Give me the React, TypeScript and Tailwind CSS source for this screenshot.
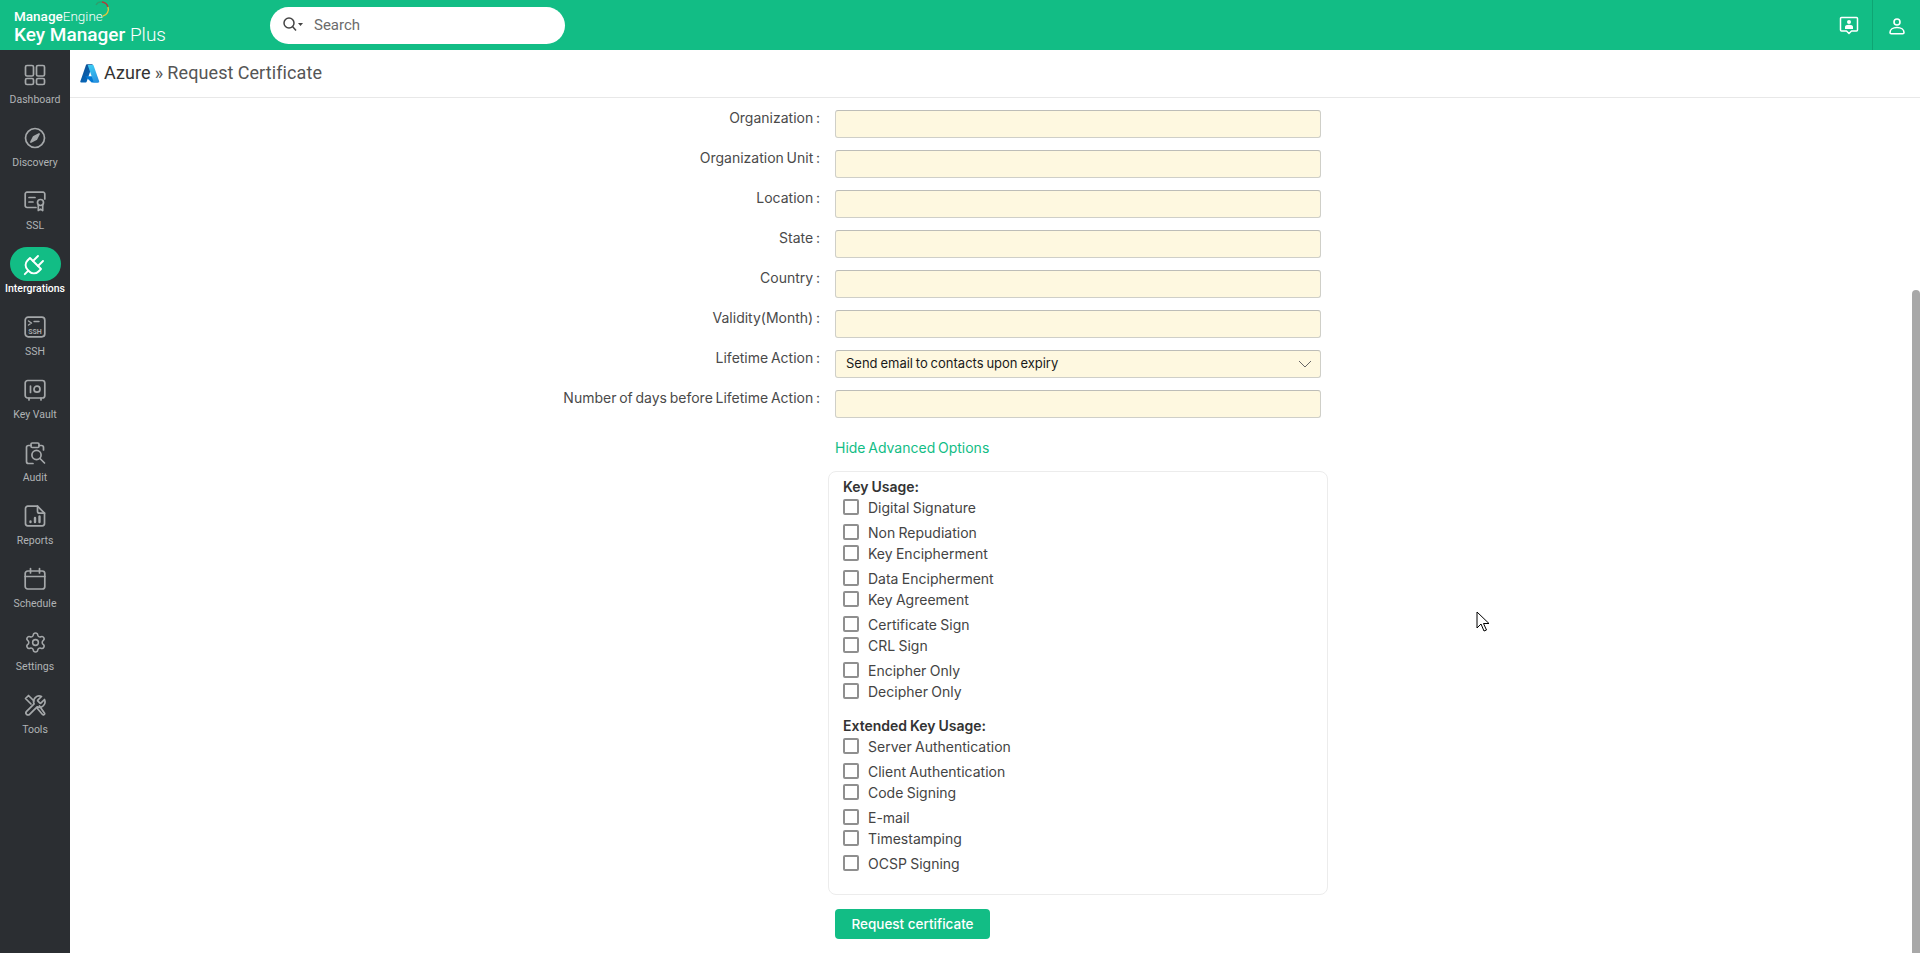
import React from "react";
import { Settings } from "lucide-react";

const stroke = { fill: "none", stroke: "currentColor", strokeWidth: 1.7, strokeLinecap: "round", strokeLinejoin: "round" } as const;

const Ic = ({ children, s = 24 }: { children: React.ReactNode; s?: number }) => (
  <svg width={s} height={s} viewBox="0 0 24 24" {...stroke}>{children}</svg>
);

const icons: Record<string, React.ReactNode> = {
  Dashboard: <Ic><rect x="2.5" y="2.5" width="8" height="10.5" rx="1.5" /><rect x="13.5" y="2.5" width="8" height="10.5" rx="1.5" /><rect x="2.5" y="15.5" width="8" height="6" rx="1.5" /><rect x="13.5" y="15.5" width="8" height="6" rx="1.5" /></Ic>,
  Discovery: <Ic><circle cx="12" cy="12" r="9.5" /><path d="M16 8 L13.3 13.3 L8 16 L10.7 10.7 Z" fill="currentColor" /></Ic>,
  SSL: <Ic><path d="M13 18.5H4a1.8 1.8 0 0 1-1.8-1.8V5A1.8 1.8 0 0 1 4 3.2h16A1.8 1.8 0 0 1 21.8 5v5" /><path d="M6 8.5h6M6 13h4" /><circle cx="17.5" cy="13.5" r="3" /><path d="M15.3 16.5v5l2.2-1.4 2.2 1.4v-5" /></Ic>,
  SSH: <Ic><rect x="2.2" y="2.2" width="19.6" height="19.6" rx="3" /><path d="M5.5 6l3 2-3 2M11 6.5h5" strokeWidth="1.4" /><text x="12" y="18.5" textAnchor="middle" fontSize="7" fontWeight="700" fill="currentColor" stroke="none" fontFamily="Roboto, sans-serif">SSH</text></Ic>,
  "Key Vault": <Ic><rect x="2.2" y="2.5" width="19.6" height="17.5" rx="2.5" /><path d="M7.5 8v6.5" /><circle cx="14" cy="11.2" r="3" /><path d="M6 20v2M18 20v2" /></Ic>,
  Audit: <Ic><path d="M8 4.5H5.5A2 2 0 0 0 3.5 6.5v14a2 2 0 0 0 2 2H10" /><path d="M16 4.5h2.5a2 2 0 0 1 2 2V9" /><rect x="8" y="2" width="8" height="4.5" rx="1.2" /><circle cx="13.5" cy="14" r="4.6" /><path d="M17 17.500l4.500 4.500" /></Ic>,
  Reports: <Ic><path d="M14.500 2.200H4.800a2.300 2.300 0 0 0-2.300 2.300v15a2.300 2.300 0 0 0 2.300 2.300h14.400a2.300 2.300 0 0 0 2.300-2.300V9.200z" /><path d="M14.500 2.200v5a2 2 0 0 0 2 2h5" /><path d="M7.500 17.500v.5M12 14v4M16.500 12.500V18" strokeWidth="2.400" /></Ic>,
  Schedule: <Ic><rect x="2.2" y="4" width="19.6" height="18" rx="2.5" /><path d="M2.200 9.500h19.600M7.500 1.500V6M16.500 1.500V6" /></Ic>,
  Settings: <Settings size={23} strokeWidth={1.6} />,
  Tools: <Ic><path d="M15 6.800a1 1 0 0 0 0 1.400l1.700 1.700a1 1 0 0 0 1.400 0l3.400-3.400a5.600 5.600 0 0 1-7.400 7.400L6.600 21.400a2.100 2.100 0 0 1-3-3l7.500-7.500a5.600 5.600 0 0 1 7.400-7.400z" /><path d="M11 8 5.500 2.500 2.500 5.500 8 11M14 15l5.500 6.500c.8.8 2.200.2 2.200-1L16.500 13" /></Ic>,
};

const Plug = () => (
  <svg width="24" height="24" viewBox="0 0 24 24" fill="none" stroke="white" strokeWidth="1.900" strokeLinecap="round" strokeLinejoin="round">
    <path d="M5.300 18.700 1.800 22.200" />
    <path d="M7 6 18 17l-2.500 2.500a6.500 6.500 0 0 1-9.200 0l-1.800-1.800a6.500 6.500 0 0 1 0-9.200z" />
    <path d="M10 9l5-5M15 14l5-5" />
  </svg>
);

const navBefore = ["Dashboard", "Discovery", "SSL"];
const navAfter = ["SSH", "Key Vault", "Audit", "Reports", "Schedule", "Settings", "Tools"];

const NavItem = ({ label }: { label: string }) => (
  <div className="h-[63px] flex flex-col items-center pt-[7px] text-[#a5a8aa]">
    <div className="h-[24px] flex items-center justify-center">{icons[label]}</div>
    <div className="mt-[6px] text-[10.5px] leading-[14px] text-[#b0b3b5]">{label}</div>
  </div>
);

const fields = ["Organization", "Organization Unit", "Location", "State", "Country", "Validity(Month)"];

const Label = ({ text }: { text: string }) => (
  <div className="w-[750px] text-right text-[14px] leading-[17px] text-[#4a4a4a] mt-[-1px] [word-spacing:-1.2px]">{text} :</div>
);

const inputCls = "w-[486px] h-[28px] ml-[15px] rounded-[3px] bg-[#fef8e0] border border-[#cfcfc8] border-t-[#bdbdb8]";

const keyUsage: [string, string][] = [
  ["Digital Signature", "h-[25px]"], ["Non Repudiation", "h-[21px]"],
  ["Key Encipherment", "h-[25px]"], ["Data Encipherment", "h-[21px]"],
  ["Key Agreement", "h-[25px]"], ["Certificate Sign", "h-[21px]"],
  ["CRL Sign", "h-[25px]"], ["Encipher Only", "h-[21px]"],
  ["Decipher Only", "h-[25px]"],
];
const extUsage: [string, string][] = [
  ["Server Authentication", "h-[25px]"], ["Client Authentication", "h-[21px]"],
  ["Code Signing", "h-[25px]"], ["E-mail", "h-[21px]"],
  ["Timestamping", "h-[25px]"], ["OCSP Signing", "h-[21px]"],
];

const Check = ({ label, h }: { label: string; h: string }) => (
  <div className={`flex items-start ${h}`}>
    <div className="w-[16px] h-[16px] rounded-[2px] border-2 border-[#8f8f8f] bg-white shrink-0" />
    <div className="ml-[9px] text-[14px] leading-[17px] text-[#444] [word-spacing:-0.6px]">{label}</div>
  </div>
);

export default function App() {
  return (
    <div className="relative w-[1920px] h-[953px] overflow-hidden bg-white flex flex-col font-['Inter',sans-serif]">
      <header className="h-[50px] bg-[#12bd85] flex items-center shrink-0 text-white">
        <div className="w-[270px] pl-[14px] relative font-['Roboto',sans-serif]">
          <div className="text-[13.5px] leading-[15px] h-[15px] mt-[5px]"><span className="font-medium">Manage</span><span className="font-light">Engine</span></div>
          <div className="text-[19px] leading-[22px] mt-[0px] font-medium">Key Manager <span className="font-light">Plus</span></div>
          <svg className="absolute left-[93px] top-[-4px]" width="18" height="18" viewBox="0 0 18 18" fill="none" strokeWidth="1.300">
            <path d="M3 5 A6 6 0 0 1 9 2" stroke="#2f9e6b" />
            <path d="M9 2 A7 7 0 0 1 15 7" stroke="#b23a3a" />
            <path d="M15 7 A7 7 0 0 1 10 16" stroke="#e8c53a" />
          </svg>
        </div>
        <div className="w-[295px] h-[37px] bg-white rounded-[19px] flex items-center">
          <div className="w-[44px] flex items-center pl-[12px] text-[#444]">
            <svg width="22" height="18" viewBox="0 0 22 18" fill="none" stroke="currentColor" strokeWidth="1.500">
              <circle cx="7" cy="7" r="5" />
              <path d="M10.500 10.500 14 14.500" />
              <path d="M16 7h5l-2.500 3z" fill="currentColor" stroke="none" />
            </svg>
          </div>
          <div className="ml-[0px] text-[15px] text-[#6b6b6b] font-['Roboto',sans-serif]">Search</div>
        </div>
        <div className="flex-1" />
        <svg width="20" height="20" viewBox="0 0 20 20" fill="none" stroke="white" strokeWidth="1.500" className="mr-[13px] mt-[1px]">
          <path d="M2.500 1.500h15a1 1 0 0 1 1 1v11.500a1 1 0 0 1-1 1h-5l-2.500 2.500-2.500-2.500h-5a1 1 0 0 1-1-1V2.500a1 1 0 0 1 1-1z" strokeLinejoin="round" />
          <circle cx="10" cy="6" r="2" fill="white" stroke="none" />
          <path d="M6 13v-2c0-1.500 1.500-2.300 4-2.300s4 .8 4 2.300v2z" fill="white" stroke="none" />
        </svg>
        <div className="w-px h-[50px] bg-[#0ea573]" />
        <div className="w-[47px] flex justify-center pl-[1px] pt-[1px]">
          <svg width="18" height="18" viewBox="0 0 18 18" fill="none" stroke="white" strokeWidth="1.600">
            <circle cx="9" cy="5" r="3" />
            <path d="M2 15.500c0-3 3-5 7-5s7 2 7 5c0 .8-.5 1.300-1.300 1.300H3.300C2.500 16.800 2 16.300 2 15.500z" />
          </svg>
        </div>
      </header>

      <div className="flex flex-1 min-h-0">
        <nav className="w-[70px] bg-[#2b2e32] shrink-0 font-['Roboto',sans-serif] pt-[6px]">
          {navBefore.map((n) => <NavItem key={n} label={n} />)}
          <div className="h-[63px] flex flex-col items-center">
            <div className="mt-[2px] w-[51px] h-[34px] rounded-[17px] bg-[#12bd85] flex items-center justify-center"><Plug /></div>
            <div className="mt-[1px] text-[10.5px] leading-[14px] text-white font-medium">Intergrations</div>
          </div>
          {navAfter.map((n) => <NavItem key={n} label={n} />)}
        </nav>

        <main className="flex-1 min-w-0">
          <div className="h-[48px] border-b border-[#e8e8e8] flex items-center pl-[10px] pb-[2px]">
            <svg width="20" height="20" viewBox="0 0 96 96">
              <defs>
                <linearGradient id="az1" x1="0" y1="0" x2="0.6" y2="1"><stop offset="0" stopColor="#114a8b" /><stop offset="1" stopColor="#0669bc" /></linearGradient>
                <linearGradient id="az2" x1="0.3" y1="0" x2="0.7" y2="1"><stop offset="0" stopColor="#3ccbf4" /><stop offset="1" stopColor="#2892df" /></linearGradient>
              </defs>
              <path d="M33 6h28L32 90a4.500 4.500 0 0 1-4.200 3H6a4.500 4.500 0 0 1-4.200-5.900L28.800 9A4.500 4.500 0 0 1 33 6z" fill="url(#az1)" />
              <path d="M73 63H28.500a2 2 0 0 0-1.400 3.500L55.700 93H88z" fill="#0078d4" />
              <path d="M61 9a4.500 4.500 0 0 1 4.300 3L92 87a4.500 4.500 0 0 1-4.200 6H60a4.500 4.500 0 0 0 4.200-6L37 9z" fill="url(#az2)" />
            </svg>
            <div className="ml-[4px] text-[18px] font-['Roboto',sans-serif] text-[#555] tracking-[0.1px] [word-spacing:-0.5px]"><span className="text-[#333]">Azure</span> » Request Certificate</div>
          </div>

          <div className="pt-[12px]">
            {fields.map((f) => (
              <div key={f} className="flex h-[40px]">
                <Label text={f} />
                <div className={inputCls} />
              </div>
            ))}
            <div className="flex h-[40px]">
              <Label text="Lifetime Action" />
              <div className={`${inputCls} flex items-center justify-between pl-[10px] pr-[8px]`}>
                <span className="text-[13px] text-[#1a1a1a] [word-spacing:-0.8px]">Send email to contacts upon expiry</span>
                <svg width="14" height="8" viewBox="0 0 14 8" fill="none" stroke="#666" strokeWidth="1"><path d="M1 1l6 6 6-6" /></svg>
              </div>
            </div>
            <div className="flex h-[28px]">
              <Label text="Number of days before Lifetime Action" />
              <div className={inputCls} />
            </div>

            <div className="ml-[765px] mt-[21px] text-[14px] leading-[17px] text-[#12bd85] [word-spacing:-1.2px]">Hide Advanced Options</div>

            <div className="ml-[758px] mt-[15px] w-[500px] h-[424px] rounded-[8px] border border-[#ececec] pl-[14px] pt-[6px]">
              <div className="text-[14px] leading-[17px] font-semibold text-[#333] h-[21px] [word-spacing:-0.6px]">Key Usage:</div>
              {keyUsage.map(([l, h]) => <Check key={l} label={l} h={h} />)}
              <div className="text-[14px] leading-[17px] font-semibold text-[#333] h-[21px] mt-[9px] [word-spacing:-0.6px]">Extended Key Usage:</div>
              {extUsage.map(([l, h]) => <Check key={l} label={l} h={h} />)}
            </div>

            <div className="ml-[765px] mt-[14px] w-[155px] h-[30px] rounded-[4px] bg-[#12bd85] text-white text-[13.5px] font-medium flex items-center justify-center">Request certificate</div>
          </div>
        </main>
      </div>

      {/* page scrollbar thumb */}
      <div className="absolute right-0 top-[290px] bottom-0 w-[8px] bg-[#a8a8a8] rounded-t-[4px]" />
      {/* mouse pointer */}
      <svg className="absolute left-[1476px] top-[611px]" width="16" height="22" viewBox="0 0 16 22">
        <path d="M1 1v16l4-4 3 7 2.500-1-3-6.500h5.500z" fill="white" stroke="black" strokeWidth="1" />
      </svg>
    </div>
  );
}
